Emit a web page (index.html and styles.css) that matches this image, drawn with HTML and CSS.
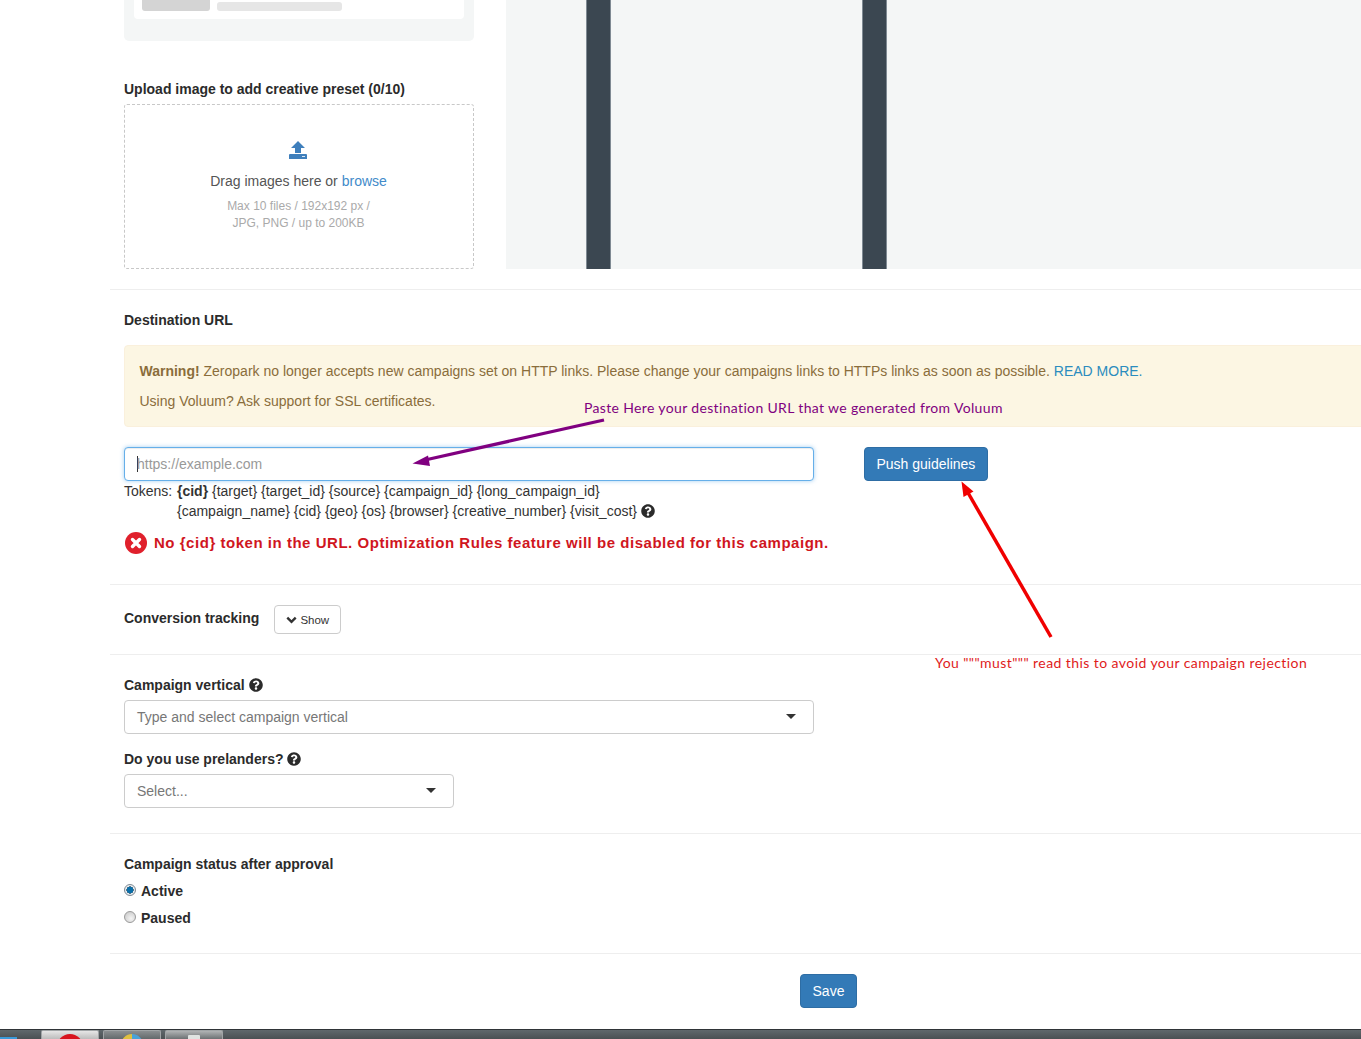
FILE: index.html
```html
<!DOCTYPE html>
<html lang="en">
<head>
<meta charset="utf-8">
<title>Create campaign</title>
<link rel="stylesheet" href="styles.css">
</head>
<body>
<main class="page">
  <section class="section creative">
    <div class="creative-left">
      <div class="preset-card">
        <div class="preset-inner">
          <span class="skel skel-a"></span>
          <span class="skel skel-b"></span>
        </div>
      </div>
      <div class="label upload-label">Upload image to add creative preset (0/10)</div>
      <div class="dropzone">
        <svg class="upload-icon" viewBox="0 0 18 18" width="18" height="18" aria-hidden="true">
          <path d="M9 0 L16 7 H12 V12 H6 V7 H2 Z" fill="#3f7fbc"/>
          <path d="M1 13 H17 Q18 13 18 14 V18 H0 V14 Q0 13 1 13 Z" fill="#3f7fbc"/>
          <rect x="13" y="15" width="3" height="1" fill="#dbe7f3"/>
        </svg>
        <div class="drop-text">Drag images here or <a class="link" href="#">browse</a></div>
        <div class="drop-hint">Max 10 files / 192x192 px /<br>JPG, PNG / up to 200KB</div>
      </div>
    </div>
    <div class="preview">
      <span class="preview-bar"></span>
      <span class="preview-bar"></span>
    </div>
  </section>

  <section class="section destination">
    <div class="label">Destination URL</div>
    <div class="alert">
      <p class="alert-line"><strong>Warning!</strong> Zeropark no longer accepts new campaigns set on HTTP links. Please change your campaigns links to HTTPs links as soon as possible. <a class="alert-link" href="#">READ MORE.</a></p>
      <p class="alert-line">Using Voluum? Ask support for SSL certificates.</p>
    </div>
    <div class="url-row">
      <div class="url-input"><span class="caret"></span><span class="placeholder">https://example.com</span></div>
      <button class="btn btn-primary" type="button">Push guidelines</button>
    </div>
    <div class="tokens">
      <span class="tokens-name">Tokens:</span>
      <div class="tokens-list">
        <b>{cid}</b> {target} {target_id} {source} {campaign_id} {long_campaign_id}<br>
        {campaign_name} {cid} {geo} {os} {browser} {creative_number} {visit_cost}
        <svg class="help" viewBox="0 0 512 512" aria-hidden="true"><use href="#q"/></svg>
      </div>
    </div>
    <div class="error">
      <svg class="error-icon" viewBox="0 0 22 22" width="22" height="22" aria-hidden="true">
        <circle cx="11" cy="11" r="11" fill="#e0202c"/>
        <path d="M7.5 7.5 L14.5 14.5 M14.5 7.5 L7.5 14.5" stroke="#fff" stroke-width="3.4" stroke-linecap="round"/>
      </svg>
      <span>No {cid} token in the URL. Optimization Rules feature will be disabled for this campaign.</span>
    </div>
  </section>

  <section class="section conversion">
    <div class="label">Conversion tracking</div>
    <button class="btn btn-small" type="button">
      <svg class="chevron" viewBox="0 0 11 8" width="11" height="8" aria-hidden="true"><path d="M1.3 1.6 L5.5 5.8 L9.7 1.6" fill="none" stroke="#333" stroke-width="2.4"/></svg>
      Show
    </button>
  </section>

  <section class="section vertical">
    <div class="label">Campaign vertical <svg class="help" viewBox="0 0 512 512" aria-hidden="true"><use href="#q"/></svg></div>
    <div class="select select-wide"><span>Type and select campaign vertical</span><i class="arrow"></i></div>
    <div class="label prelander-label">Do you use prelanders? <svg class="help" viewBox="0 0 512 512" aria-hidden="true"><use href="#q"/></svg></div>
    <div class="select select-narrow"><span>Select...</span><i class="arrow"></i></div>
  </section>

  <section class="section status">
    <div class="label">Campaign status after approval</div>
    <label class="radio"><input class="radio-input" type="radio" name="status" checked> Active</label>
    <label class="radio"><input class="radio-input" type="radio" name="status"> Paused</label>
  </section>

  <section class="section footer">
    <button class="btn btn-primary" type="button">Save</button>
  </section>
</main>

<div class="taskbar">
  <span class="start"></span>
  <span class="task task-on"><i class="task-icon icon-red"></i></span>
  <span class="task"><i class="task-icon icon-chrome"></i></span>
  <span class="task task-light"><i class="task-icon icon-doc"></i></span>
</div>

<svg class="arrows" viewBox="0 0 1361 1039" width="1361" height="1039" aria-hidden="true">
  <defs>
    <symbol id="q" viewBox="0 0 512 512">
      <path fill="currentColor" d="M504 256c0 136.997-111.043 248-248 248S8 392.997 8 256C8 119.083 119.043 8 256 8s248 111.083 248 248zM262.655 90c-54.497 0-89.255 22.957-116.549 63.758-3.536 5.286-2.353 12.415 2.715 16.258l34.699 26.31c5.205 3.947 12.621 3.008 16.665-2.122 17.864-22.658 30.113-35.797 57.303-35.797 20.429 0 45.698 13.148 45.698 32.958 0 14.976-12.363 22.667-32.534 33.976C247.128 238.528 216 254.941 216 296v4c0 6.627 5.373 12 12 12h56c6.627 0 12-5.373 12-12v-1.333c0-28.462 83.186-29.647 83.186-106.667 0-58.002-60.165-102-116.531-102zM256 338c-25.365 0-46 20.635-46 46 0 25.364 20.635 46 46 46s46-20.636 46-46c0-25.365-20.635-46-46-46z"/>
    </symbol>
  </defs>
  <path d="M604 420 L425 460" stroke="#800080" stroke-width="3.2" fill="none"/>
  <path d="M412.5 463.5 L428 455.5 L430 466 Z" fill="#800080"/>
  <path d="M1051 637 L967 491" stroke="#f00000" stroke-width="3.5" fill="none"/>
  <path d="M961.5 481.5 L973.5 491.5 L963.5 497 Z" fill="#f00000"/>
</svg>
<div class="note note-purple">Paste Here your destination URL that we generated from Voluum</div>
<div class="note note-red">You """must""" read this to avoid your campaign rejection</div>
</body>
</html>
```
FILE: styles.css
```css
* { box-sizing: border-box; }
html, body { margin: 0; height: 1039px; overflow: hidden; }
body {
  display: flex;
  flex-direction: column;
  background: #fff;
  color: #333;
  font: 14px/20px "Liberation Sans", Arial, sans-serif;
  position: relative;
}
.page { flex: 1; width: 1437px; margin-left: 110px; }
.section { padding: 0 0 0 14px; border-bottom: 1px solid #eee; }
.label { font-weight: 700; color: #2b2b2b; }

.creative { display: flex; gap: 32px; height: 290px; padding-bottom: 20px; }
.creative-left { width: 350px; }
.preset-card { background: #f4f6f6; border-radius: 0 0 5px 5px; padding: 0 10px 22px; }
.preset-inner {
  background: #fff; border-radius: 0 0 4px 4px; height: 19px; padding: 0 8px;
  display: flex; gap: 7px; align-items: flex-start;
}
.skel { display: block; border-radius: 0 0 3px 3px; }
.skel-a { width: 68px; height: 11px; background: #d4d4d4; }
.skel-b { width: 125px; height: 9px; margin-top: 2px; background: #e6e6e6; border-radius: 3px; }
.upload-label { margin-top: 38px; margin-bottom: 5px; }
.dropzone {
  height: 165px; border: 1px dashed #c8c8c8; border-radius: 3px;
  display: flex; flex-direction: column; align-items: center; padding-top: 36px;
}
.upload-icon { display: block; margin-left: -3px; }
.drop-text { margin-top: 12px; margin-left: -1px; color: #555; }
.link { color: #428bca; text-decoration: none; }
.drop-hint { margin-top: 7px; margin-left: -1px; font-size: 12px; line-height: 17px; color: #aaa; text-align: center; }
.preview { flex: 1; height: 269px; background: #f4f6f6; display: flex; padding-left: 80px; gap: 251px; }
.preview-bar { width: 25px; background: #3b4751; border: solid #7f8a93; border-width: 0 1px; }

.destination { height: 295px; padding-top: 20px; }
.alert {
  margin-top: 15px; height: 82px; padding: 15px 15px 15px 14.5px; background: #fcf6e3;
  border: 1px solid #faf0dc; border-radius: 4px; color: #8a6d3b;
}
.alert-line { margin: 0 0 10px; }
.alert-link { color: #2b8cbe; text-decoration: none; }
.url-row { display: flex; gap: 50px; margin-top: 20px; }
.url-input {
  width: 690px; height: 34px; padding: 6px 12px; display: flex; align-items: center;
  border: 1px solid #66afe9; border-radius: 4px; background: #fff;
  box-shadow: inset 0 1px 1px rgba(0,0,0,.075), 0 0 4px rgba(102,175,233,.6);
}
.caret { width: 1px; height: 16px; background: #333; margin-right: -1px; }
.placeholder { color: #999; }
.btn {
  font: 14px/20px "Liberation Sans", Arial, sans-serif;
  border-radius: 4px; border: 1px solid transparent; cursor: pointer;
}
.btn-primary { height: 34px; padding: 6px 11.5px; background: #337ab7; border-color: #2e6da4; color: #fff; }
.tokens { display: flex; }
.tokens-name { width: 53px; }
.help { width: 14px; height: 14px; vertical-align: -2px; color: #2b2b2b; }
.error {
  display: flex; align-items: center; gap: 7px; margin-top: 11px; margin-left: 1px;
  color: #d0161e; font-weight: 700; font-size: 15px; letter-spacing: .53px;
}
.error-icon { flex: none; }

.conversion { height: 70px; display: flex; align-items: flex-start; gap: 15px; padding-top: 23px; }
.btn-small {
  margin-top: -3px; height: 29px; padding: 0 11px; font-size: 11.5px; line-height: 18px;
  background: #fff; border-color: #ccc; color: #333;
  display: flex; align-items: center; gap: 3px;
}
.vertical { height: 179px; padding-top: 20px; }
.select {
  height: 34px; margin-top: 5px; padding: 6px 12px; display: flex; align-items: center; justify-content: space-between;
  border: 1px solid #ccc; border-radius: 4px; background: #fff; color: #777;
}
.select-wide { width: 690px; }
.select-narrow { width: 330px; }
.arrow { width: 0; height: 0; border: 5.5px solid transparent; border-top-color: #333; border-bottom: 0; margin-right: 5px; margin-top: -1px; }
.prelander-label { margin-top: 15px; }

.status { height: 120px; padding-top: 20px; }
.radio { display: flex; align-items: center; gap: 5px; margin-top: 7px; font-weight: 700; color: #2b2b2b; }
.radio-input {
  appearance: none; margin: -2px 0 0; width: 12px; height: 12px; border-radius: 50%;
  border: 1px solid #9a9a9a; background: radial-gradient(circle at 60% 65%, #f4f4f4, #c4c4c4);
}
.radio-input:checked { border-color: #7f8a93; background: radial-gradient(circle, #0a6ea8 0 3px, #123a55 3.4px, #e6ecf0 3.8px); }

.footer { border: 0; padding: 20px 0 0; display: flex; justify-content: center; }

.taskbar {
  height: 10px; flex: none; display: flex; overflow: hidden; position: relative;
  background: linear-gradient(#2f3437 0 1px, #60686c 1px, #4a5053);
}
.start { width: 17px; margin-right: 24px; background: linear-gradient(transparent 0 8px, #3a9ad9 8px); }
.task {
  width: 58px; margin-right: 4px; margin-top: 1px; border-radius: 2px 2px 0 0; display: flex; justify-content: center;
  background: linear-gradient(#8b8f91, #63696b); border: 1px solid #a0a4a6; border-bottom: 0;
}
.task-on { background: linear-gradient(#e6e6e6, #bcbcbc); }
.task-light { background: linear-gradient(#b0b3b4, #6c7173); }
.task-icon { display: block; width: 26px; height: 26px; margin-top: 3px; border-radius: 50%; flex: none; }
.icon-red { background: #d8141e; }
.icon-chrome { width: 22px; height: 22px; background: conic-gradient(#4aa2d8 0 110deg, #f5d63d 110deg 220deg, #5fae3f 220deg 300deg, #e0c040 300deg); }
.icon-doc { width: 12px; margin-top: 4px; border-radius: 1px; background: #dfe3e1; }

.arrows { position: absolute; left: 0; top: 0; pointer-events: none; }
.note { position: absolute; font-family: Lato, "Open Sans", sans-serif; font-size: 14px; line-height: 18px; white-space: nowrap; }
.note-purple { left: 584px; top: 399px; color: #800080; letter-spacing: .35px; }
.note-red { left: 935px; top: 654px; color: #e01b1b; letter-spacing: .43px; }
```
